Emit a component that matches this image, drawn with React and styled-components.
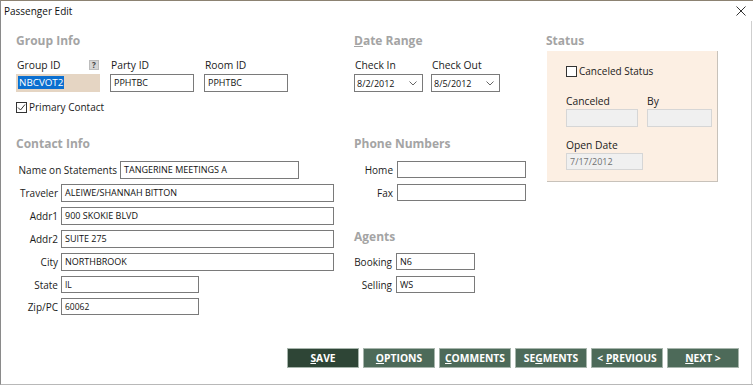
import React from "react";
import styled, { createGlobalStyle } from "styled-components";

const Global = createGlobalStyle`
  html, body { margin: 0; padding: 0; background: #fff; }
  body { font-family: "Segoe UI", "Open Sans", "Noto Sans", sans-serif; color: #1b1b1b; }
`;

const Window = styled.div`
  width: 753px;
  height: 385px;
  box-sizing: border-box;
  border-left: 1px solid #8a8a8a;
  border-top: 1px solid #8c8272;
  border-bottom: 1px solid #b8b8b8;
  display: flex;
  flex-direction: column;
  background: #fff;
  overflow: hidden;
`;

const TitleBar = styled.div`
  height: 20px;
  flex: none;
  display: flex;
  align-items: center;
  justify-content: space-between;
  padding: 0 7px 0 3px;
  font-size: 10px;
  color: #111;
`;

const Body = styled.div`
  flex: 1;
  display: flex;
  flex-direction: column;
  margin-right: 1px;
  border-right: 1px solid #cfcfcf;
  padding: 12px 12px 16px 15px;
`;

const Main = styled.div`
  display: flex;
`;

const LeftGrid = styled.div`
  display: grid;
  grid-template-columns: 338px 191px;
  grid-template-rows: 103px auto;
`;

const Section = styled.div`
  display: flex;
  flex-direction: column;
`;

const Heading = styled.div`
  font-size: 12px;
  font-weight: 700;
  line-height: 16px;
  height: 16px;
  color: #a4a4a4;
  margin-top: ${(p) => p.$mt || 0}px;
  u { text-decoration-thickness: 1px; }
`;

const FieldLine = styled.div`
  display: flex;
  gap: ${(p) => p.$gap || 10}px;
  margin-top: ${(p) => (p.$mt === undefined ? 9 : p.$mt)}px;
`;

const Field = styled.div`
  display: flex;
  flex-direction: column;
  width: ${(p) => p.$w}px;
`;

const LabelRow = styled.div`
  display: flex;
  justify-content: space-between;
  align-items: center;
  height: 14px;
  margin-bottom: 2px;
`;

const Label = styled.span`
  font-size: 10.3px;
  line-height: 14px;
  color: #1b1b1b;
  white-space: nowrap;
  padding-left: 1px;
`;

const HelpBtn = styled.span`
  width: 10px;
  height: 10px;
  margin-right: 1px;
  box-sizing: border-box;
  background: #d6d6d6;
  border: 1px solid #bdbdbd;
  font-size: 8px;
  line-height: 8px;
  text-align: center;
  font-weight: 700;
  color: #444;
`;

const TextBox = styled.div`
  box-sizing: border-box;
  width: ${(p) => (p.$w ? `${p.$w}px` : "auto")};
  height: ${(p) => p.$h || 18}px;
  border: 1px solid ${(p) => (p.$disabled ? "#d6d6d6" : "#7a7a7a")};
  background: ${(p) => (p.$disabled ? "#f0f0f0" : "#fff")};
  color: ${(p) => (p.$disabled ? "#707070" : "#111")};
  font-size: ${(p) => p.$fs || 9}px;
  line-height: ${(p) => (p.$h || 18) - 2}px;
  padding-left: 3px;
  white-space: nowrap;
  overflow: hidden;
`;

const SelectedBox = styled.div`
  box-sizing: border-box;
  width: 84px;
  height: 18px;
  background: #e5d5c3;
  padding: 1px 0 0 2px;
  font-size: 9.8px;
  line-height: 15px;
`;

const Highlight = styled.span`
  background: #0b6fd0;
  color: #fff;
  padding: 0 1px;
`;

const Select = styled.div`
  box-sizing: border-box;
  width: 69px;
  height: 18px;
  border: 1px solid #7a7a7a;
  display: flex;
  align-items: center;
  justify-content: space-between;
  padding: 0 5px 0 2px;
  font-size: 9px;
  color: #111;
`;

const CheckRow = styled.label`
  display: flex;
  align-items: center;
  gap: 2px;
  margin-top: ${(p) => p.$mt || 0}px;
  font-size: 10px;
  line-height: 13px;
`;

const Box = styled.span`
  width: 11px;
  height: 11px;
  box-sizing: border-box;
  border: 1px solid #333;
  background: #fff;
  display: inline-flex;
  align-items: center;
  justify-content: center;
`;

const Rows = styled.div`
  display: flex;
  flex-direction: column;
  gap: ${(p) => p.$gap || 5}px;
  margin-top: ${(p) => p.$mt || 9}px;
`;

const FieldRow = styled.div`
  display: grid;
  grid-template-columns: ${(p) => p.$lw}px auto;
  column-gap: ${(p) => p.$cg || 3}px;
  align-items: center;
  justify-content: start;
`;

const RowLabel = styled.span`
  font-size: 10px;
  text-align: right;
  white-space: nowrap;
`;

const StatusCol = styled.div`
  margin-left: 1px;
  display: flex;
  flex-direction: column;
`;

const Panel = styled.div`
  margin-top: 2px;
  margin-left: 1px;
  width: 171px;
  height: 131px;
  box-sizing: border-box;
  background: #fcefe3;
  border-right: 1px solid #c8c2ba;
  border-bottom: 1px solid #c8c2ba;
  padding: 14px 0 0 19px;
  display: flex;
  flex-direction: column;
`;

const PanelLabel = styled.span`
  font-size: 10.3px;
  line-height: 13px;
  height: 13px;
  margin-bottom: 1px;
`;

const Footer = styled.div`
  margin-top: auto;
  display: flex;
  justify-content: flex-end;
  gap: 4px;
`;

const Button = styled.button`
  width: 72px;
  height: 20px;
  box-sizing: border-box;
  border: 1px solid #a7b5ac;
  background: ${(p) => (p.$primary ? "#2e4536" : "#4d6a59")};
  color: #fff;
  font-family: inherit;
  font-size: 10.3px;
  font-weight: 700;
  padding: 0;
  cursor: pointer;
  u { text-decoration-thickness: 1px; }
`;

const Chevron = () => (
  <svg width="8" height="5" viewBox="0 0 8 5">
    <path d="M0.5 0.5 L4 4 L7.5 0.5" fill="none" stroke="#666" strokeWidth="1" />
  </svg>
);

const Check = () => (
  <svg width="9" height="9" viewBox="0 0 9 9">
    <path d="M1 4.5 L3.5 7 L8 1.5" fill="none" stroke="#333" strokeWidth="1" />
  </svg>
);

const CloseIcon = () => (
  <svg width="10" height="10" viewBox="0 0 10 10">
    <path d="M0.5 0.5 L9.5 9.5 M9.5 0.5 L0.5 9.5" stroke="#333" strokeWidth="1" />
  </svg>
);

const contact = [
  ["Traveler", "ALEIWE/SHANNAH BITTON", 273, 9],
  ["Addr1", "900 SKOKIE BLVD", 273, 9],
  ["Addr2", "SUITE 275", 273, 9],
  ["City", "NORTHBROOK", 273, 9],
  ["State", "IL", 138, 8.5],
  ["Zip/PC", "60062", 138, 8.5],
];

export default function App() {
  return (
    <>
      <Global />
      <Window>
        <TitleBar>
          <span>Passenger Edit</span>
          <CloseIcon />
        </TitleBar>
        <Body>
          <Main>
            <LeftGrid>
              <Section>
                <Heading>Group Info</Heading>
                <FieldLine>
                  <Field $w={84}>
                    <LabelRow>
                      <Label>Group ID</Label>
                      <HelpBtn>?</HelpBtn>
                    </LabelRow>
                    <SelectedBox>
                      <Highlight>NBCVOT2</Highlight>
                    </SelectedBox>
                  </Field>
                  <Field $w={84}>
                    <LabelRow>
                      <Label>Party ID</Label>
                    </LabelRow>
                    <TextBox>PPHTBC</TextBox>
                  </Field>
                  <Field $w={84}>
                    <LabelRow>
                      <Label>Room ID</Label>
                    </LabelRow>
                    <TextBox>PPHTBC</TextBox>
                  </Field>
                </FieldLine>
                <CheckRow $mt={9}>
                  <Box>
                    <Check />
                  </Box>
                  Primary Contact
                </CheckRow>
              </Section>

              <Section>
                <Heading>
                  <u>D</u>ate Range
                </Heading>
                <FieldLine $gap={8}>
                  <Field $w={69}>
                    <LabelRow>
                      <Label>Check In</Label>
                    </LabelRow>
                    <Select>
                      8/2/2012
                      <Chevron />
                    </Select>
                  </Field>
                  <Field $w={69}>
                    <LabelRow>
                      <Label>Check Out</Label>
                    </LabelRow>
                    <Select>
                      8/5/2012
                      <Chevron />
                    </Select>
                  </Field>
                </FieldLine>
              </Section>

              <Section>
                <Heading>Contact Info</Heading>
                <Rows>
                  <FieldRow $lw={101}>
                    <RowLabel>Name on Statements</RowLabel>
                    <TextBox $w={179}>TANGERINE MEETINGS A</TextBox>
                  </FieldRow>
                  {contact.map(([label, value, w, fs]) => (
                    <FieldRow key={label} $lw={42}>
                      <RowLabel>{label}</RowLabel>
                      <TextBox $w={w} $fs={fs} $h={w < 200 ? 17 : 18}>
                        {value}
                      </TextBox>
                    </FieldRow>
                  ))}
                </Rows>
              </Section>

              <Section>
                <Heading>Phone Numbers</Heading>
                <Rows $gap={6}>
                  <FieldRow $lw={39} $cg={4}>
                    <RowLabel>Home</RowLabel>
                    <TextBox $w={129} $h={17} />
                  </FieldRow>
                  <FieldRow $lw={39} $cg={4}>
                    <RowLabel>Fax</RowLabel>
                    <TextBox $w={129} $h={17} />
                  </FieldRow>
                </Rows>
                <Heading $mt={28}>Agents</Heading>
                <Rows $mt={8} $gap={6}>
                  <FieldRow $lw={38} $cg={4}>
                    <RowLabel>Booking</RowLabel>
                    <TextBox $w={79} $h={17}>N6</TextBox>
                  </FieldRow>
                  <FieldRow $lw={38} $cg={4}>
                    <RowLabel>Selling</RowLabel>
                    <TextBox $w={79} $h={17}>WS</TextBox>
                  </FieldRow>
                </Rows>
              </Section>
            </LeftGrid>

            <StatusCol>
              <Heading>Status</Heading>
              <Panel>
                <CheckRow>
                  <Box />
                  Canceled Status
                </CheckRow>
                <FieldLine $gap={9} $mt={17}>
                  <Field $w={72}>
                    <PanelLabel>Canceled</PanelLabel>
                    <TextBox $disabled />
                  </Field>
                  <Field $w={65}>
                    <PanelLabel>By</PanelLabel>
                    <TextBox $disabled />
                  </Field>
                </FieldLine>
                <FieldLine $mt={12}>
                  <Field $w={77}>
                    <PanelLabel>Open Date</PanelLabel>
                    <TextBox $disabled $h={17}>7/17/2012</TextBox>
                  </Field>
                </FieldLine>
              </Panel>
            </StatusCol>
          </Main>

          <Footer>
            <Button $primary>
              <u>S</u>AVE
            </Button>
            <Button>
              <u>O</u>PTIONS
            </Button>
            <Button>
              <u>C</u>OMMENTS
            </Button>
            <Button>
              SE<u>G</u>MENTS
            </Button>
            <Button>
              &lt; <u>P</u>REVIOUS
            </Button>
            <Button>
              <u>N</u>EXT &gt;
            </Button>
          </Footer>
        </Body>
      </Window>
    </>
  );
}
